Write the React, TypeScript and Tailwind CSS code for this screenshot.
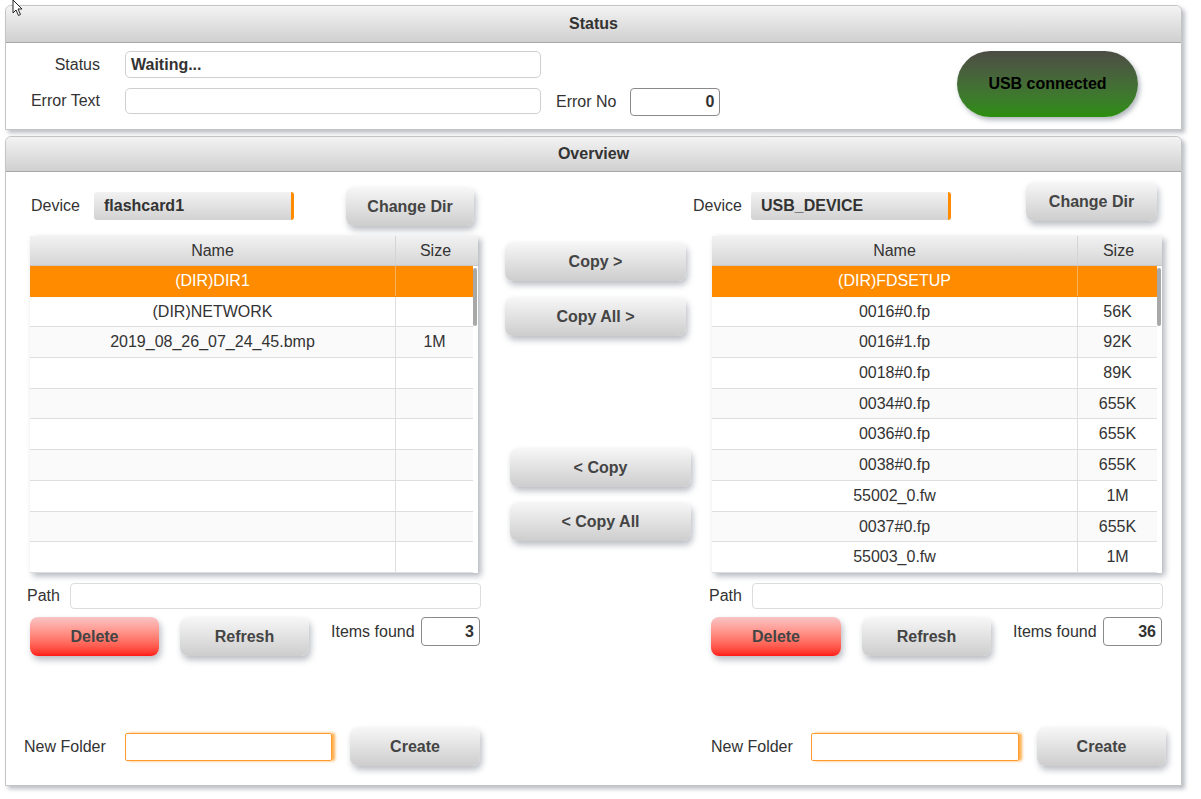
import type { ReactNode } from "react";

type Row = [string, string];

const LEFT_ROWS: Row[] = [
  ["(DIR)DIR1", ""],
  ["(DIR)NETWORK", ""],
  ["2019_08_26_07_24_45.bmp", "1M"],
  ["", ""],
  ["", ""],
  ["", ""],
  ["", ""],
  ["", ""],
  ["", ""],
  ["", ""],
];

const RIGHT_ROWS: Row[] = [
  ["(DIR)FDSETUP", ""],
  ["0016#0.fp", "56K"],
  ["0016#1.fp", "92K"],
  ["0018#0.fp", "89K"],
  ["0034#0.fp", "655K"],
  ["0036#0.fp", "655K"],
  ["0038#0.fp", "655K"],
  ["55002_0.fw", "1M"],
  ["0037#0.fp", "655K"],
  ["55003_0.fw", "1M"],
];

function Btn({ children, red, className = "" }: { children: ReactNode; red?: boolean; className?: string }) {
  return (
    <button
      type="button"
      className={`h-[39px] shrink-0 rounded-[8px] text-[16px] font-bold text-[#444] shadow-[2px_4px_6px_rgba(60,70,90,0.35)] ${
        red ? "bg-linear-to-b from-[#f7c4c4] to-[#ff1414]" : "bg-linear-to-b from-[#f7f7f7] to-[#cdcdcd]"
      } ${className}`}
    >
      {children}
    </button>
  );
}

function DeviceSelect({ value }: { value: string }) {
  return (
    <div className="h-[28px] w-[200px] shrink-0 rounded-[3px] border-r-[3px] border-[#ff8c00] bg-linear-to-b from-[#f2f2f2] to-[#d2d2d2] pl-[10px] text-[16px] font-bold leading-[28px] text-[#333]">
      {value}
    </div>
  );
}

function FileTable({ rows, width }: { rows: Row[]; width: string }) {
  return (
    <div className={`${width} flex h-[337px] flex-col bg-white shadow-[3px_3px_6px_rgba(60,70,90,0.4)]`}>
      <div className="grid h-[30px] shrink-0 grid-cols-[365px_1fr] border-b border-[#c8c8c8] bg-linear-to-b from-[#f2f2f2] to-[#d6d6d6] text-[16px] leading-[29px] text-[#333]">
        <div className="text-center">Name</div>
        <div className="border-l border-[#d4d4d4] pr-[3px] text-center">Size</div>
      </div>
      <div className="flex flex-1 overflow-hidden">
        <div className="flex-1">
          {rows.map(([name, size], i) => (
            <div
              key={i}
              className={`grid h-[30.7px] grid-cols-[365px_1fr] border-b text-[16px] leading-[30px] ${
                i === 0
                  ? "border-[#ff8c00] bg-[#ff8c00] text-white"
                  : i % 2 === 1
                  ? "border-[#dedede] bg-white text-[#333]"
                  : "border-[#dedede] bg-[#fafafa] text-[#333]"
              }`}
            >
              <div className="text-center">{name}</div>
              <div className={`border-l text-center ${i === 0 ? "border-[#f5b060]" : "border-[#dedede]"}`}>{size}</div>
            </div>
          ))}
        </div>
        <div className="w-[5px] shrink-0 bg-white">
          <div className="mt-[2px] h-[58px] w-[4px] rounded-[2px] bg-[#a8a8a8]" />
        </div>
      </div>
    </div>
  );
}

function Header({ title, h }: { title: string; h: string }) {
  return (
    <div
      className={`${h} flex items-center justify-center rounded-t-[6px] border-b border-[#a8a8a8] bg-linear-to-b from-[#f3f3f3] to-[#d0d0d0] text-[16px] font-bold text-[#333]`}
    >
      {title}
    </div>
  );
}

export default function App() {
  return (
    <div className="relative min-h-[799px] w-[1201px] bg-white font-['Liberation_Sans',Arial,sans-serif] text-[16px] text-[#333]">
      <svg className="pointer-events-none absolute left-[12px] top-0" width="12" height="17" viewBox="0 0 12 17">
        <path d="M1 0 L1 13 L4 10 L6.5 15.5 L8.5 14.5 L6 9 L10 9 Z" fill="white" stroke="#222" strokeWidth="1" />
      </svg>

      {/* Status */}
      <div className="ml-[5px] w-[1177px] pt-[5px]">
        <div className="rounded-t-[6px] border border-[#c4c4c4] bg-white shadow-[3px_3px_4px_rgba(60,70,90,0.35)]">
          <Header title="Status" h="h-[37px]" />
          <div className="flex h-[86px]">
            <div className="flex flex-col gap-[10px] pt-[8px]">
              <div className="flex items-center">
                <div className="w-[94px] text-right">Status</div>
                <div className="ml-[25px] h-[27px] w-[416px] rounded-[5px] border border-[#cfcfcf] pl-[5px] font-bold leading-[25px] text-[#333]">
                  Waiting...
                </div>
              </div>
              <div className="flex items-start">
                <div className="w-[94px] text-right leading-[26px]">Error Text</div>
                <div className="ml-[25px] h-[26px] w-[416px] rounded-[5px] border border-[#cfcfcf]" />
                <div className="ml-[15px] leading-[27px]">Error No</div>
                <div className="ml-[14px] h-[28px] w-[90px] rounded-[4px] border border-[#8a8a8a] pr-[5px] text-right font-bold leading-[26px]">
                  0
                </div>
              </div>
            </div>
            <div className="ml-auto mr-[43px] mt-[8px] flex h-[66px] w-[181px] items-center justify-center rounded-full bg-linear-to-b from-[#4c4c44] to-[#2a8e0a] font-bold text-black shadow-[2px_3px_5px_rgba(60,70,90,0.4)]">
              USB connected
            </div>
          </div>
        </div>
      </div>

      {/* Overview */}
      <div className="ml-[5px] w-[1177px] pt-[6px]">
        <div className="rounded-t-[6px] border border-[#c4c4c4] bg-white shadow-[3px_3px_4px_rgba(60,70,90,0.35)]">
          <Header title="Overview" h="h-[35px]" />
          <div className="flex pb-[19px] pl-[18px] pt-[10px]">
            {/* left */}
            <div className="w-[458px] shrink-0">
              <div className="flex h-[44px] items-start">
                <div className="mt-[10px] flex h-[28px] items-center">
                  <span className="ml-[7px] w-[63px]">Device</span>
                  <DeviceSelect value="flashcard1" />
                </div>
                <Btn className="ml-[52px] mt-[5px] w-[128px]">Change Dir</Btn>
              </div>
              <div className="ml-[6px] mt-[10px]">
                <FileTable rows={LEFT_ROWS} width="w-[448px]" />
              </div>
              <div className="mt-[10px] flex h-[26px] items-center">
                <span className="ml-[3px] w-[43px]">Path</span>
                <div className="h-[26px] w-[411px] rounded-[4px] border border-[#dcdcdc]" />
              </div>
              <div className="mt-[8px] flex items-start">
                <Btn red className="ml-[6px] w-[129px]">Delete</Btn>
                <Btn className="ml-[21px] w-[129px]">Refresh</Btn>
                <span className="ml-[22px] mt-[3px] w-[90px]">Items found</span>
                <div className="h-[29px] w-[59px] rounded-[4px] border border-[#8a8a8a] pr-[5px] text-right font-bold leading-[27px]">3</div>
              </div>
              <div className="mt-[71px] flex h-[39px] items-center">
                <span className="w-[101px]">New Folder</span>
                <div className="h-[28px] w-[207px] rounded-[2px] border border-[#ff9a30] shadow-[3px_0_3px_rgba(255,140,0,0.7)]" />
                <Btn className="ml-[18px] w-[130px]">Create</Btn>
              </div>
            </div>

            {/* middle */}
            <div className="ml-[23px] flex w-[186px] shrink-0 flex-col pt-[60px]">
              <Btn className="w-[181px]">Copy &gt;</Btn>
              <Btn className="mt-[16px] w-[181px]">Copy All &gt;</Btn>
              <Btn className="ml-[5px] mt-[112px] w-[181px]">&lt; Copy</Btn>
              <Btn className="ml-[5px] mt-[15px] w-[181px]">&lt; Copy All</Btn>
            </div>

            {/* right */}
            <div className="ml-[2px] w-[473px] shrink-0">
              <div className="flex h-[44px] items-start">
                <div className="mt-[10px] flex h-[28px] items-center">
                  <span className="w-[58px]">Device</span>
                  <DeviceSelect value="USB_DEVICE" />
                </div>
                <Btn className="ml-[75px] w-[131px]">Change Dir</Btn>
              </div>
              <div className="ml-[19px] mt-[10px]">
                <FileTable rows={RIGHT_ROWS} width="w-[450px]" />
              </div>
              <div className="mt-[10px] flex h-[26px] items-center">
                <span className="ml-[16px] w-[43px]">Path</span>
                <div className="h-[26px] w-[411px] rounded-[4px] border border-[#dcdcdc]" />
              </div>
              <div className="mt-[8px] flex items-start">
                <Btn red className="ml-[18px] w-[130px]">Delete</Btn>
                <Btn className="ml-[21px] w-[129px]">Refresh</Btn>
                <span className="ml-[22px] mt-[3px] w-[90px]">Items found</span>
                <div className="h-[29px] w-[59px] rounded-[4px] border border-[#8a8a8a] pr-[5px] text-right font-bold leading-[27px]">36</div>
              </div>
              <div className="mt-[71px] flex h-[39px] items-center">
                <span className="ml-[18px] w-[100px]">New Folder</span>
                <div className="h-[28px] w-[208px] rounded-[2px] border border-[#ff9a30] shadow-[3px_0_3px_rgba(255,140,0,0.7)]" />
                <Btn className="ml-[18px] w-[129px]">Create</Btn>
              </div>
            </div>
          </div>
        </div>
      </div>
    </div>
  );
}
